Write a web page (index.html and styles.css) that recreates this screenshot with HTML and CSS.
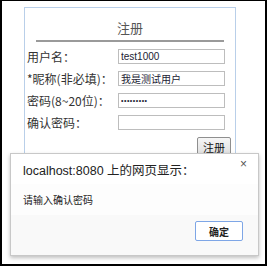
FILE: index.html
```html
<!DOCTYPE html>
<html lang="zh-CN">
<head>
    <meta charset="UTF-8">
    <title>注册</title>
    <link rel="stylesheet" href="styles.css">
</head>
<body>
    <div class="frame">
        <!-- Register form -->
        <div class="panel">
            <div class="title">注册</div>
            <div class="rule"></div>
            <div class="row">
                <span class="label">用户名：</span>
                <input class="field" type="text" value="test1000">
            </div>
            <div class="row">
                <span class="label">*昵称(非必填)：</span>
                <input class="field" type="text" value="我是测试用户">
            </div>
            <div class="row">
                <span class="label">密码(8~20位)：</span>
                <input class="field pass" type="password" value="123456789">
            </div>
            <div class="row">
                <span class="label">确认密码：</span>
                <input class="field pass" type="password" value="">
            </div>
            <div class="actions">
                <button class="submit">注册</button>
            </div>
        </div>

        <!-- Alert dialog -->
        <div class="dialog">
            <div class="dialog-head">
                <span class="dialog-title">localhost:8080 上的网页显示：</span>
                <span class="close">×</span>
            </div>
            <div class="dialog-body">请输入确认密码</div>
            <div class="dialog-foot">
                <button class="ok">确定</button>
            </div>
        </div>
    </div>
</body>
</html>
```
FILE: styles.css
```css
body, html {
    margin: 0;
    padding: 0;
    background: #fff;
    font-family: "Liberation Sans", "Noto Sans CJK SC", sans-serif;
}
.frame {
    width: 267px;
    height: 266px;
    box-sizing: border-box;
    border: 2px solid #000;
    border-top-width: 1px;
    padding: 6px 0 0 22px;
    position: relative;
    overflow: hidden;
}
.panel {
    width: 212px;
    height: 170px;
    box-sizing: border-box;
    border: 1px solid #b9cfe9;
}
.title {
    text-align: center;
    font-size: 13px;
    line-height: 16px;
    color: #555;
    padding-top: 12px;
    font-family: "Noto Sans CJK SC", sans-serif;
}
.rule {
    height: 2px;
    background: #9a9a9a;
    margin: 4px 11px 0 11px;
}
.row {
    display: flex;
    align-items: center;
    height: 15px;
    margin-top: 7px;
    padding-left: 2px;
}
.row:first-of-type {
    margin-top: 11px;
}
.label {
    width: 91px;
    font-size: 12px;
    color: #333;
    white-space: nowrap;
    font-family: "Noto Sans CJK SC", sans-serif;
}
.field {
    width: 107px;
    height: 15px;
    box-sizing: border-box;
    border: 1px solid #bdbdbd;
    padding: 0 2px;
    margin: 0;
    font-size: 10px;
    color: #223;
    font-family: "Liberation Sans", "Noto Sans CJK SC", sans-serif;
    outline: none;
}
.pass {
    font-size: 7px;
    letter-spacing: 0.5px;
}
.actions {
    display: flex;
    justify-content: flex-end;
    margin-top: 7px;
    padding-right: 4px;
}
.submit {
    width: 34px;
    height: 19px;
    padding: 0;
    font-size: 11px;
    border: 1px solid #8f8f8f;
    border-radius: 2px;
    background: linear-gradient(#f6f6f6, #dedede);
    color: #111;
    font-family: "Noto Sans CJK SC", sans-serif;
}
.dialog {
    position: absolute;
    left: 8px;
    top: 152px;
    width: 249px;
    height: 103px;
    box-sizing: border-box;
    border: 1px solid #c8c8c8;
    background: #f9f9f9;
    box-shadow: 0 2px 4px rgba(0, 0, 0, 0.25);
    display: flex;
    flex-direction: column;
}
.dialog-head {
    height: 30px;
    display: flex;
    align-items: center;
    padding: 0 11px 0 12px;
    background: #fff;
}
.dialog-title {
    flex: 1;
    font-size: 12.5px;
    color: #222;
}
.close {
    font-size: 12px;
    color: #555;
    align-self: flex-start;
    margin-top: 3px;
}
.dialog-body {
    height: 31px;
    line-height: 31px;
    padding-left: 12px;
    font-size: 10px;
    color: #222;
    background: #fdfdfd;
    font-family: "Noto Sans CJK SC", sans-serif;
}
.dialog-foot {
    flex: 1;
    display: flex;
    justify-content: flex-end;
    align-items: flex-start;
    padding: 6px 15px 0 0;
}
.ok {
    width: 48px;
    height: 20px;
    padding: 0;
    border: 1px solid #7ea6e6;
    border-radius: 2px;
    background: #fff;
    font-size: 10px;
    font-weight: bold;
    color: #222;
    font-family: "Noto Sans CJK SC", sans-serif;
}
```
